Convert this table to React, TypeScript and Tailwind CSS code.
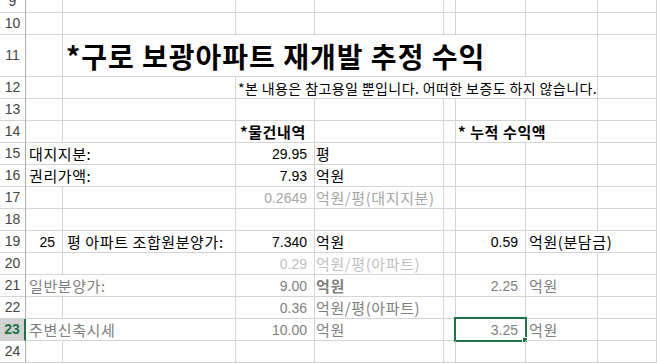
import React from "react";

const COLS =
  "grid grid-cols-[26px_37px_173px_79px_129px_12px_70px_72px_1fr]";

const KR = "font-['Noto_Sans_CJK_KR',sans-serif]";
const NUM = "font-['Liberation_Sans','Noto_Sans_CJK_KR',sans-serif]";

function Header({ n, active }: { n: number; active?: boolean }) {
  return (
    <div
      className={
        active
          ? `${NUM} flex items-center justify-center border-b border-b-[#d4d4d4] border-r-2 border-r-[#217346] bg-[#d2d2d2] text-[14px] font-bold text-[#217346]`
          : `${NUM} flex items-center justify-center border-b border-b-[#d4d4d4] border-r border-r-[#ababab] text-[14px] text-[#444]`
      }
    >
      {n}
    </div>
  );
}

function Cell({
  className = "",
  children,
}: {
  className?: string;
  children?: React.ReactNode;
}) {
  return (
    <div
      className={`relative flex min-w-0 items-center whitespace-nowrap border-b border-r border-[#d4d4d4] leading-none ${className}`}
    >
      {children}
    </div>
  );
}

function Row({
  n,
  tall,
  active,
  children,
}: {
  n: number;
  tall?: boolean;
  active?: boolean;
  children: React.ReactNode;
}) {
  return (
    <div className={`${COLS} ${tall ? "h-[42px]" : "h-[22px]"}`}>
      <Header n={n} active={active} />
      {children}
    </div>
  );
}

// 빈 셀들
function Blank({ count }: { count: number }) {
  return (
    <>
      {Array.from({ length: count }).map((_, i) => (
        <Cell key={i} />
      ))}
    </>
  );
}

const kr = `${KR} text-[15px] tracking-[0.6px]`;
const txt = `${kr} pl-[3px]`;
const num = `${NUM} justify-end pr-[7px] text-[14px]`;

export default function App() {
  return (
    <div className="h-[364px] w-[657px] overflow-hidden bg-white text-black">
      <div className="-mt-[9px]">
        <Row n={9}>
          <Blank count={8} />
        </Row>
        <Row n={10}>
          <Blank count={8} />
        </Row>
        <Row n={11} tall>
          <Cell />
          <Cell
            className={`col-span-5 ${KR} pl-[3px] text-[28px] font-bold tracking-[1px]`}
          >
            *구로 보광아파트 재개발 추정 수익
          </Cell>
          <Blank count={2} />
        </Row>
        <Row n={12}>
          <Blank count={2} />
          <Cell className={`col-span-5 ${KR} pl-[2px] text-[14px] tracking-[0.4px]`}>
            *본 내용은 참고용일 뿐입니다. 어떠한 보증도 하지 않습니다.
          </Cell>
          <Cell />
        </Row>
        <Row n={13}>
          <Blank count={8} />
        </Row>
        <Row n={14}>
          <Blank count={2} />
          <Cell className={`${kr} pl-[4px] font-bold`}>*물건내역</Cell>
          <Blank count={2} />
          <Cell className={`col-span-2 ${kr} pl-[2px] font-bold`}>
            * 누적 수익액
          </Cell>
          <Cell />
        </Row>
        <Row n={15}>
          <Cell className={`col-span-2 ${txt}`}>대지지분:</Cell>
          <Cell className={num}>29.95</Cell>
          <Cell className={`${kr} pl-[1px]`}>평</Cell>
          <Blank count={4} />
        </Row>
        <Row n={16}>
          <Cell className={`col-span-2 ${txt}`}>권리가액:</Cell>
          <Cell className={num}>7.93</Cell>
          <Cell className={`${kr} pl-[1px]`}>억원</Cell>
          <Blank count={4} />
        </Row>
        <Row n={17}>
          <Blank count={2} />
          <Cell className={`${num} text-[#a6a6a6]`}>0.2649</Cell>
          <Cell className={`${kr} pl-[1px] text-[#a6a6a6]`}>
            억원/평(대지지분)
          </Cell>
          <Blank count={4} />
        </Row>
        <Row n={18}>
          <Blank count={8} />
        </Row>
        <Row n={19}>
          <Cell className={`${num} pr-[3px]`}>25</Cell>
          <Cell className={`${kr} pl-[4px]`}>평 아파트 조합원분양가:</Cell>
          <Cell className={num}>7.340</Cell>
          <Cell className={`${kr} pl-[1px]`}>억원</Cell>
          <Cell />
          <Cell className={num}>0.59</Cell>
          <Cell className={`col-span-2 ${kr} pl-[3px]`}>억원(분담금)</Cell>
        </Row>
        <Row n={20}>
          <Blank count={2} />
          <Cell className={`${num} text-[#bfbfbf]`}>0.29</Cell>
          <Cell className={`${kr} pl-[1px] text-[#bfbfbf]`}>억원/평(아파트)</Cell>
          <Blank count={4} />
        </Row>
        <Row n={21}>
          <Cell className={`col-span-2 ${txt} text-[#808080]`}>일반분양가:</Cell>
          <Cell className={`${num} text-[#808080]`}>9.00</Cell>
          <Cell className={`${kr} pl-[1px] font-bold text-[#7f7f7f]`}>억원</Cell>
          <Cell />
          <Cell className={`${num} text-[#808080]`}>2.25</Cell>
          <Cell className={`${kr} pl-[3px] text-[#808080]`}>억원</Cell>
          <Cell />
        </Row>
        <Row n={22}>
          <Blank count={2} />
          <Cell className={`${num} text-[#808080]`}>0.36</Cell>
          <Cell className={`${kr} pl-[1px] text-[#808080]`}>억원/평(아파트)</Cell>
          <Blank count={4} />
        </Row>
        <Row n={23} active>
          <Cell className={`col-span-2 ${txt} text-[#808080]`}>주변신축시세</Cell>
          <Cell className={`${num} text-[#808080]`}>10.00</Cell>
          <Cell className={`${kr} pl-[1px] text-[#808080]`}>억원</Cell>
          <Cell />
          <Cell className={`${num} text-[#808080]`}>
            3.25
            {/* 선택된 셀 테두리 */}
            <div className="pointer-events-none absolute -left-[2px] -top-[2px] h-[25px] w-[73px] border-2 border-[#217346]" />
            <div className="absolute -bottom-[3px] -right-[3px] h-[6px] w-[6px] border border-white bg-[#217346]" />
          </Cell>
          <Cell className={`${kr} pl-[3px] text-[#808080]`}>억원</Cell>
          <Cell />
        </Row>
        <Row n={24}>
          <Blank count={8} />
        </Row>
      </div>
    </div>
  );
}
